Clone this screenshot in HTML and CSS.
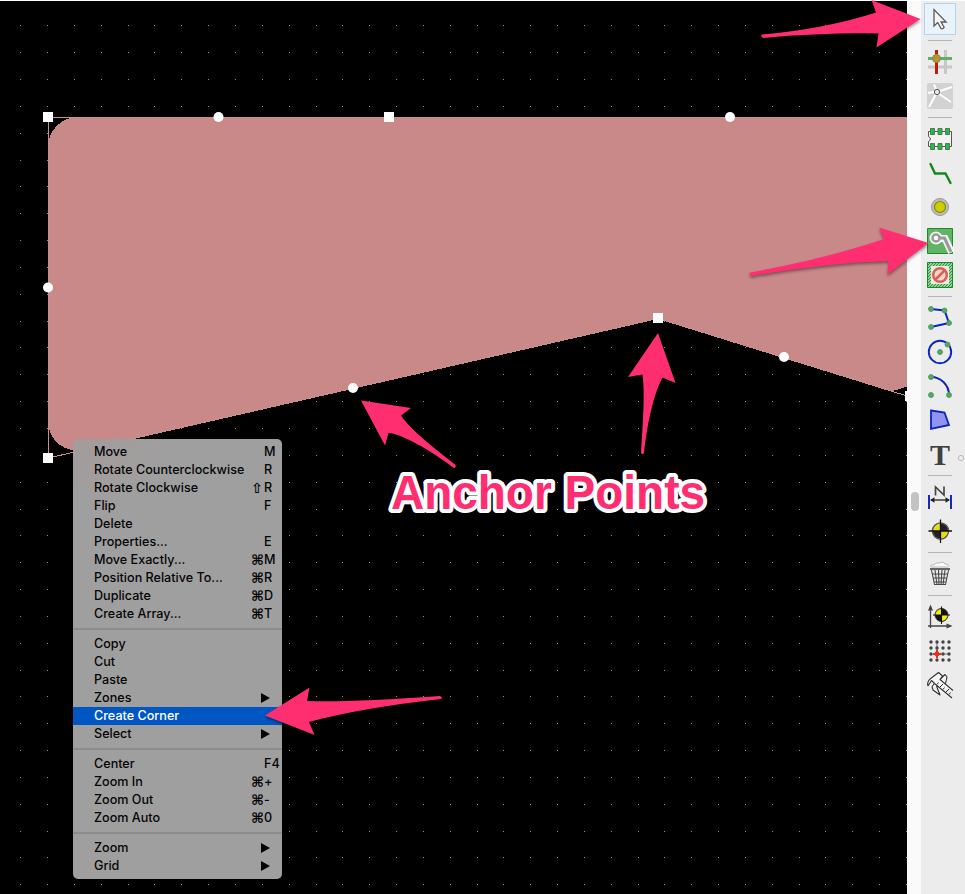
FILE: index.html
```html
<!DOCTYPE html>
<html lang="en">
<head>
<meta charset="utf-8">
<title>PCB Editor</title>
<link rel="stylesheet" href="styles.css">
</head>
<body>
<div class="editor">
  <main class="board">
    <svg class="drawing" width="907" height="893" viewBox="0 1 907 893">
      <path id="grid" class="grid"/>
      <g shape-rendering="crispEdges">
        <path class="zone" d="M78 117H907V387C901 387 899 391 890 391L658 318L82 450A29 29 0 0 1 48 423V147A30 30 0 0 1 78 117Z"/>
        <path class="outline" d="M907 117.5H48.500V458L658 318.500L907 396"/>
      </g>
      <g class="handle">
        <path shape-rendering="crispEdges" d="M43 112h10v10h-10zM384 112h10v10h-10zM43 453h10v10h-10zM653 313h10v10h-10zM905 391h10v10h-10z"/>
        <circle cx="218.500" cy="117" r="5"/><circle cx="730" cy="117" r="5"/><circle cx="48" cy="287.500" r="5"/><circle cx="353" cy="388" r="5"/><circle cx="784" cy="357" r="5"/>
      </g>
    </svg>
  </main>
  <div class="scroll"><div class="thumb"></div></div>
  <aside class="tools">
    <div class="tool active"><svg viewBox="0 0 34 34"><path d="M11 7.500V24l3.700-3.500 3.400 6q1.500 1 3-1.200l-3-5.300h5z" fill="#f6f6f6" stroke="#5b5b5b" stroke-width="1.300"/></svg></div>
    <hr>
    <div class="tool"><svg viewBox="0 0 34 34"><path d="M5 22H29M22.500 5V29" stroke="#c8c8c8" stroke-width="3"/><path d="M13.500 5V29" stroke="#bd1c08" stroke-width="3"/><path d="M5 13.500H29" stroke="#63ad6c" stroke-width="3"/><circle cx="13.500" cy="13.500" r="4" fill="#b3982c" stroke="#8b8555"/></svg></div>
    <div class="tool"><svg viewBox="0 0 34 34"><rect x="4" y="4" width="26" height="26" rx="2" fill="#d2d2d2"/><path d="M13 10L11 5.500M11 13L5 14M17 12L29 8M16 15l12 8M12.500 16L6 28" stroke="#fff" stroke-width="2"/><circle cx="14" cy="13" r="2.600" fill="#eee" stroke="#555"/></svg></div>
    <hr>
    <div class="tool"><svg viewBox="0 0 34 34"><path d="M5.500 9.500h23v15h-23v-5q4-2.500 0-5z" fill="#f3f3f3" stroke="#555"/><g fill="#20bd43" stroke="#55765a"><path d="M7.500 6.500h4v6h-4zM15 6.500h4v6h-4zM22.500 6.500h4v6h-4zM7.500 21.500h4v6h-4zM15 21.500h4v6h-4zM22.500 21.500h4v6h-4z"/></g></svg></div>
    <div class="tool"><svg viewBox="0 0 34 34"><path d="M7.500 8L12 17.500H22.500L27.500 27" fill="none" stroke="#13891b" stroke-width="2.400" stroke-linecap="round"/></svg></div>
    <div class="tool"><svg viewBox="0 0 34 34"><circle cx="17" cy="17" r="8.500" fill="#bdbdb6" stroke="#999"/><circle cx="17" cy="17" r="5.500" fill="#cccc08" stroke="#898700" stroke-width="1.200"/></svg></div>
    <div class="tool"><svg viewBox="0 0 34 34"><path d="M4.500 4.500h25v25h-25z" fill="#62b365" stroke="#198b27"/><path d="M13 14.500h9l6.500 14" fill="none" stroke="#f5f5f5" stroke-width="7"/><circle cx="13" cy="14" r="6.500" fill="#f5f5f5"/><path d="M16 14h5.500l6.500 14" fill="none" stroke="#999" stroke-width="3"/><circle cx="13" cy="14" r="3.500" fill="#fff" stroke="#999" stroke-width="2.500"/></svg></div>
    <div class="tool"><svg viewBox="0 0 34 34"><defs><pattern id="hatch" width="3" height="3" patternUnits="userSpaceOnUse"><path d="M0 3L3 0M-1 1L1-1M2 4L4 2" stroke="#239936" stroke-width="1.300"/></pattern></defs><path d="M4.500 4.500h25v25h-25z" fill="#f5fff5"/><path d="M4.500 4.500h25v25h-25z" fill="url(#hatch)" stroke="#168b25"/><path d="M8 8h18v18H8z" fill="#f0e9e6"/><circle cx="17" cy="17" r="6.800" fill="#f5d4cd" stroke="#d96054" stroke-width="2.500"/><path d="M12.500 21.500l9-9" stroke="#d96054" stroke-width="2.500"/></svg></div>
    <hr>
    <div class="tool"><svg viewBox="0 0 34 34"><path d="M8 8L21.500 9.500L26 22L8 26" fill="none" stroke="#0b25bb" stroke-width="2"/><g class="node"><circle cx="8" cy="8" r="2.500"/><circle cx="21.500" cy="9.500" r="2.500"/><circle cx="26" cy="22" r="2.500"/><circle cx="8" cy="26" r="2.500"/></g></svg></div>
    <div class="tool"><svg viewBox="0 0 34 34"><circle cx="17" cy="17" r="11.200" fill="none" stroke="#0b25bb" stroke-width="1.900"/><g class="node"><circle cx="17" cy="17" r="2.500"/><circle cx="24.500" cy="9.500" r="2.500"/></g></svg></div>
    <div class="tool"><svg viewBox="0 0 34 34"><path d="M8 8A18 18 0 0 1 26 26" fill="none" stroke="#0b25bb" stroke-width="2"/><g class="node"><circle cx="8" cy="8" r="2.500"/><circle cx="8" cy="26" r="2.500"/><circle cx="26" cy="26" r="2.500"/></g></svg></div>
    <div class="tool"><svg viewBox="0 0 34 34"><path d="M8 7.500L21.500 9.500L26 22L8 26z" fill="#9293f0" stroke="#0b25bb" stroke-width="1.800"/></svg></div>
    <div class="tool text-tool">T</div>
    <hr>
    <div class="tool"><svg viewBox="0 0 34 34"><path d="M6 15V29M28 15V29" stroke="#0921bd" stroke-width="1.900"/><path d="M8 20H26" stroke="#222" stroke-width="1.300"/><path d="M7 20l4.500-2.800v5.600zM27 20l-4.500-2.800v5.600z" fill="#222"/><path d="M12.500 15.500V7L21 15V6.500" fill="none" stroke="#484848" stroke-width="1.700"/></svg></div>
    <div class="tool"><svg viewBox="0 0 34 34"><circle cx="17.500" cy="17" r="8" fill="#222" stroke="#555" stroke-width="1.500"/><path d="M17.500 17V9.500A7.500 7.500 0 0 0 10 17zM17.500 17v7.500A7.500 7.500 0 0 0 25 17z" fill="#e5de16"/><path d="M17.500 5.500V29M5.500 17H29" stroke="#111" stroke-width="1.300"/></svg></div>
    <hr>
    <div class="tool"><svg viewBox="0 0 34 34"><path d="M8 10q-1-3 3-2q1-3 5-2q5-2 6 1q5 0 3 3z" fill="#fafafa" stroke="#bbb"/><path d="M7 12H27" stroke="#555" stroke-width="1.800"/><path d="M8.500 13L11.500 27.500H22.500L25.500 13M12 13l2 15M15.500 13L16 28M19 13L18 28M22 13l-2 15M9.500 17H25M10 21H24M11 25H23" fill="none" stroke="#484848" stroke-width="1.100"/></svg></div>
    <hr>
    <div class="tool"><svg viewBox="0 0 34 34"><path d="M7.500 28V7M5 26H28" stroke="#444" stroke-width="1.300"/><path d="M7.500 4.500l-2.500 6h5zM29.500 26l-6-2.500v5z" fill="#444"/><circle cx="18.500" cy="15" r="6.500" fill="#111" stroke="#333"/><path d="M18.500 15V9A6 6 0 0 0 12.500 15zM18.500 15v6A6 6 0 0 0 24.500 15z" fill="#f3ee10"/><path d="M18.500 6.500V24M10 15H27" stroke="#111" stroke-width="1.100"/></svg></div>
    <div class="tool"><svg viewBox="0 0 34 34"><path d="M14 8V20H26" fill="none" stroke="#777" stroke-width="1"/><path d="M8 8H27M8 14H27M8 20H27M8 26H27" fill="none" stroke="#444" stroke-width="3.400" stroke-dasharray="0 6" stroke-linecap="round"/><path d="M10 20h8M14 16v8" stroke="#ef2b16" stroke-width="2"/><circle cx="14" cy="20" r="2.400" fill="#ef2b16"/></svg></div>
    <div class="tool"><svg viewBox="0 0 34 34"><path d="M5 18Q3.500 13 9 9.500L15.500 4.500L19.500 8L17 11.500L30 22.500M5 18L8.500 12.500L11.500 15.500L29 30M11.500 15.500L9 18.500L10 22L17 27L13.500 18M17 11.500L22 6.500L24 9L22.500 15.500" fill="#f6f6f6" stroke="#333" stroke-width="1.100" stroke-linejoin="round"/><path d="M14 16.500l1.500-2M17 19l3-3M20 21.500l1.500-2M23 24l3-3M26 26.500l1.500-2" stroke="#333"/></svg></div>
  </aside>
</div>
<nav class="menu" id="menu"></nav>
<svg class="notes" viewBox="0 0 965 894">
  <g class="arrows">
    <path d="M762 34.500Q825 29 876 12.500L871.500 0L920.500 19L876.500 47.500L878.500 33.500Q825 32.500 763 38Q760 36 762 34.500Z"/>
    <path d="M750 272.500Q825 259 884 239L879 227.500L928.500 243L887.500 274.500L888.500 261Q825 263 751 276Q748.500 274 750 272.500Z"/>
    <path d="M361 400.500L411 408L401 415.500Q410 430 455 464.500Q457 467 454 468C430 450 402 434 388.500 433L385 445.500Z"/>
    <path d="M658 333L675.500 383L662.500 377.500C653 395 647 426 644 453Q642.500 455 641 453C643 420 645 393 642.500 374.500L628 377Z"/>
    <path d="M265 715.500L309.500 687.500L307 701Q350 702.500 440 696Q443 697.500 441 699Q360 708 309 722L314.500 735Z"/>
  </g>
  <text class="caption" x="391" y="509" textLength="314" lengthAdjust="spacingAndGlyphs">Anchor Points</text>
  <circle cx="961" cy="458" r="2.600" fill="#eee" stroke="#bbb"/>
</svg>
<script src="main.js"></script>
</body>
</html>
```
FILE: styles.css
```css
body { margin: 0; background: #fff; overflow: hidden; }
.editor { display: flex; height: 893px; padding-top: 1px; }
.board { width: 907px; background: #000; }
.drawing { display: block; }
.grid { fill: #929292; shape-rendering: crispEdges; }
.zone { fill: #c98989; }
.outline { fill: none; stroke: #c89090; stroke-width: 1; }
.handle { fill: #fff; }
.scroll { width: 14px; background: #fafafa; }
.thumb { width: 8px; height: 19px; margin: 491px 2px 0 4px; border-radius: 4px; background: #c3c3c3; }
.tools { display: flex; flex-direction: column; width: 42px; padding: 1px 0 0 2px; background: #ececec; }
.tool { box-sizing: border-box; width: 34px; height: 34px; }
.tool svg { display: block; width: 34px; height: 34px; }
.tool.active { width: 32px; height: 32px; margin: 1px; border: 1px solid #afd3f2; background: #e8f3fc; }
.active svg { margin: -2px; }
.tools hr { width: 24px; height: 1px; margin: 4px 0 4px 5px; border: 0; background: #b3b3b3; }
.text-tool { color: #404040; font: bold 30px/35px "Liberation Serif", serif; text-align: center; }
.node { fill: #4faa63; stroke: #53905f; stroke-width: .8; }
.menu { position: absolute; left: 73px; top: 439px; box-sizing: border-box; width: 209px; padding: 4px 0; border-radius: 5px; background: radial-gradient(circle at 20px 0, #a49b9b, #9f9f9f 75px); color: #050505; font: 500 12.6px/18px Inter, sans-serif; }
.item { display: grid; grid-template-columns: 157px 13px 1fr; height: 18px; padding-left: 21px; white-space: nowrap; }
.item.selected { background: #0057c4; color: #fff; }
.mod { font: bold 14px/18px "DejaVu Sans", sans-serif; }
.submenu { width: 0; height: 0; margin: 4px 0 0 -3px; border: solid transparent; border-width: 5px 0 5px 9px; border-left-color: #050505; }
.divider { height: 2px; padding: 5px 0; background: #8d8d8d content-box; }
.notes { position: absolute; left: 0; top: 0; width: 965px; height: 894px; pointer-events: none; }
.arrows { fill: #ff2e70; filter: drop-shadow(0 2px 1.500px rgba(0, 0, 0, .4)); }
.caption { font: bold 48px "Liberation Sans", sans-serif; fill: #ff2e70; stroke: #fff; stroke-width: 8px; stroke-linejoin: round; paint-order: stroke; }
```
FILE: main.js
```js
const step = 26.84;
let dots = "";
for (let row = 0; row < 33; row++) {
  for (let col = 0; col < 34; col++) {
    dots += `M${Math.floor(20.78 + col * step)} ${Math.floor(25.9 + row * step)}h1v1h-1z`;
  }
}
document.getElementById("grid").setAttribute("d", dots);

// Each entry: label, modifier, key. A null entry is a divider.
const entries = [
  ["Move", "", "M"], ["Rotate Counterclockwise", "", "R"], ["Rotate Clockwise", "⇧", "R"],
  ["Flip", "", "F"], ["Delete", "", ""], ["Properties...", "", "E"], ["Move Exactly...", "⌘", "M"],
  ["Position Relative To...", "⌘", "R"], ["Duplicate", "⌘", "D"], ["Create Array...", "⌘", "T"], null,
  ["Copy", "", ""], ["Cut", "", ""], ["Paste", "", ""], ["Zones", "", "▶"],
  ["Create Corner", "", ""], ["Select", "", "▶"], null,
  ["Center", "", "F4"], ["Zoom In", "⌘", "+"], ["Zoom Out", "⌘", "-"], ["Zoom Auto", "⌘", "0"], null,
  ["Zoom", "", "▶"], ["Grid", "", "▶"]
];
document.getElementById("menu").innerHTML = entries.map(entry => {
  if (!entry) return '<div class="divider"></div>';
  const [label, mod, key] = entry;
  const end = key === "▶" ? '<span class="submenu"></span>' : `<span>${key}</span>`;
  return `<div class="item${label === "Create Corner" ? " selected" : ""}"><span>${label}</span><span class="mod">${mod}</span>${end}</div>`;
}).join("");
```
